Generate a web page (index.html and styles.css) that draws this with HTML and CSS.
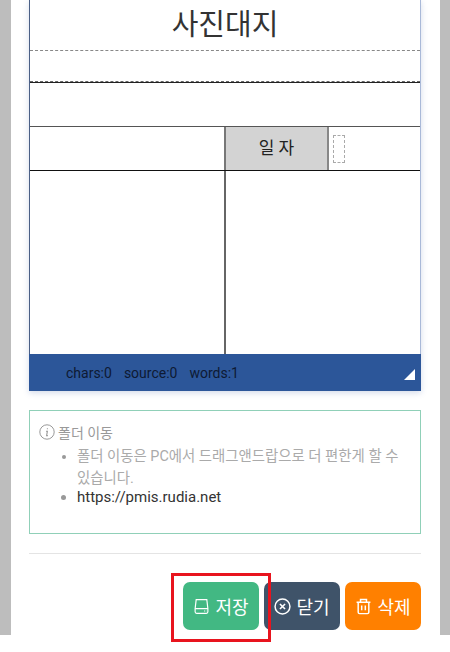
FILE: index.html
```html
<!DOCTYPE html>
<html lang="ko">
<head>
  <meta charset="UTF-8">
  <meta name="viewport" content="width=device-width, initial-scale=1.0">
  <title>사진대지</title>
  <link rel="stylesheet" href="styles.css">
</head>
<body>
  <div class="backdrop">
    <div class="panel">
      <div class="editor">
        <div class="sheet">
          <div class="doc-title">사진대지</div>
          <div class="doc-sub"></div>
          <div class="doc-row"></div>
          <div class="doc-meta">
            <div class="meta-blank"></div>
            <div class="meta-label">일 자</div>
            <div class="meta-value"><span class="placeholder"></span></div>
          </div>
          <div class="doc-photos">
            <div class="photo-cell"></div>
            <div class="photo-cell"></div>
          </div>
        </div>
        <div class="statusbar">
          <span>chars:0</span>
          <span>source:0</span>
          <span>words:1</span>
          <span class="resize-grip"></span>
        </div>
      </div>

      <div class="notice">
        <div class="notice-title">
          <svg class="info-icon" viewBox="0 0 16 16" width="16" height="16">
            <circle cx="8" cy="8" r="7.2" fill="none" stroke="#999" stroke-width="1"/>
            <path d="M8.4 4.2v1.1M7 7.2h1.4l-.8 4.4h1.3" fill="none" stroke="#999" stroke-width="1.1"/>
          </svg>
          <span>폴더 이동</span>
        </div>
        <ul class="notice-list">
          <li class="muted">폴더 이동은 PC에서 드래그앤드랍으로 더 편한게 할 수 있습니다.</li>
          <li class="link">https://pmis.rudia.net</li>
        </ul>
      </div>

      <hr class="divider">

      <div class="actions">
        <button class="btn btn-save">
          <svg viewBox="0 0 16 16" width="17" height="17">
            <path d="M3 1.5h10l1 8.5v3a1.4 1.4 0 0 1-1.4 1.4H3.4A1.4 1.4 0 0 1 2 13v-3zM2 10h12M10.4 12.2h.9M12 12.2h.5" fill="none" stroke="#fff" stroke-width="1.1"/>
          </svg>
          <span>저장</span>
        </button>
        <button class="btn btn-close">
          <svg viewBox="0 0 16 16" width="17" height="17">
            <circle cx="8" cy="8" r="7" fill="none" stroke="#fff" stroke-width="1.4"/>
            <path d="M5.6 5.6l4.8 4.8M10.4 5.6l-4.8 4.8" fill="none" stroke="#fff" stroke-width="1.5"/>
          </svg>
          <span>닫기</span>
        </button>
        <button class="btn btn-delete">
          <svg viewBox="0 0 16 16" width="17" height="17">
            <path d="M1.5 4h13M5.2 4V1.4h5.6V4M3 4v9.4c0 .8.5 1.3 1.3 1.3h7.4c.8 0 1.3-.5 1.3-1.3V4M6.3 7v4.6M9.7 7v4.6" fill="none" stroke="#fff" stroke-width="1.4"/>
          </svg>
          <span>삭제</span>
        </button>
      </div>
    </div>
  </div>

  <div class="highlight"></div>
</body>
</html>
```

FILE: styles.css
```css
html, body {
  margin: 0;
  height: 652px;
  overflow: hidden;
  background: #fff;
}
body {
  font-family: Roboto, "Noto Sans CJK KR", sans-serif;
  color: #333;
  position: relative;
}
.backdrop {
  height: 635px;
  padding: 0 10px 0 11px;
  box-sizing: border-box;
  background: #bdbdbd;
  overflow: hidden;
}
.panel {
  height: 100%;
  background: #fff;
  padding: 0 19px 0 18px;
}
.editor {
  width: 392px;
  box-shadow: 0 2px 6px rgba(60, 90, 160, 0.22);
}
.sheet {
  box-sizing: border-box;
  height: 354px;
  border-left: 1px solid #4a5f85;
  border-right: 1px solid #a9b9d8;
  background: #fff;
  display: flex;
  flex-direction: column;
}
.doc-title {
  box-sizing: border-box;
  height: 51px;
  line-height: 51px;
  text-align: center;
  font-size: 29px;
  color: #333;
  border-bottom: 1px dashed #888;
}
.doc-sub {
  height: 30px;
  border-bottom: 1px dashed #666;
}
.doc-row {
  height: 43px;
  border-top: 1px solid #222;
}
.doc-meta {
  height: 43px;
  display: grid;
  grid-template-columns: 196px 103px 1fr;
  border-top: 1px solid #555;
}
.meta-blank {
  border-right: 2px solid #777;
}
.meta-label {
  background: #d3d3d3;
  border-right: 2px solid #888;
  text-align: center;
  line-height: 42px;
  font-size: 17px;
  color: #222;
}
.meta-value {
  padding: 8px 0 0 4px;
}
.placeholder {
  display: block;
  width: 10px;
  height: 26px;
  border: 1px dashed #aaa;
}
.doc-photos {
  flex: 1;
  display: grid;
  grid-template-columns: 196px 1fr;
  border-top: 1px solid #111;
}
.photo-cell:first-child {
  border-right: 2px solid #666;
}
.statusbar {
  height: 37px;
  background: #2c5699;
  display: flex;
  align-items: center;
  gap: 12px;
  padding-left: 37px;
  font-size: 14px;
  color: #0e1a33;
  position: relative;
}
.resize-grip {
  position: absolute;
  right: 6px;
  bottom: 11px;
  width: 0;
  height: 0;
  border-style: solid;
  border-width: 0 0 11px 11px;
  border-color: transparent transparent #fff transparent;
}
.notice {
  box-sizing: border-box;
  width: 392px;
  height: 124px;
  margin-top: 19px;
  padding: 11px 9px;
  border: 1px solid #90d0b8;
  font-size: 15px;
  color: #999;
}
.notice-title {
  display: flex;
  align-items: center;
  gap: 3px;
  height: 20px;
}
.notice-title span {
  font-size: 14px;
}
.notice-list {
  margin: 4px 0 0;
  padding-left: 38px;
  line-height: 21px;
  color: #333;
  word-break: keep-all;
}
.notice-list li::marker {
  color: #999;
}
.muted {
  color: #aaa;
  font-size: 14.4px;
  line-height: 22px;
}
.link {
  margin-top: -3px;
}
.divider {
  width: 392px;
  margin: 19px 0 0;
  border: 0;
  border-top: 1px solid #e4e4e4;
}
.actions {
  width: 392px;
  margin-top: 28px;
  display: flex;
  justify-content: flex-end;
  gap: 5px;
}
.btn {
  width: 76px;
  height: 48px;
  border: 0;
  border-radius: 7px;
  display: flex;
  align-items: center;
  justify-content: center;
  gap: 5px;
  padding: 0;
  font-family: inherit;
  font-size: 18px;
  color: #fff;
}
.btn-save {
  background: #42b883;
}
.btn-close {
  background: #3f5369;
}
.btn-delete {
  background: #ff8000;
}
.highlight {
  position: absolute;
  left: 171px;
  top: 573px;
  width: 94px;
  height: 63px;
  border: 3px solid #e8141e;
}
```
